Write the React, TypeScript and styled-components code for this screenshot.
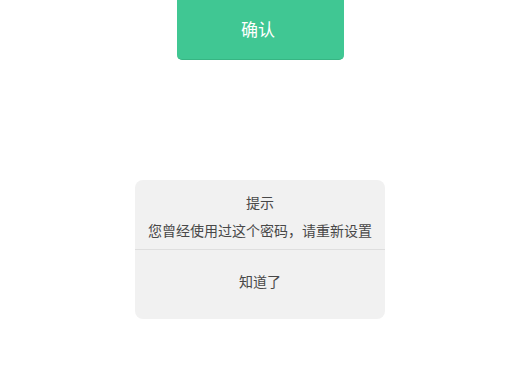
import styled, { createGlobalStyle } from "styled-components";

const GlobalStyle = createGlobalStyle`
  html, body {
    margin: 0;
    padding: 0;
    background: #ffffff;
  }

  body {
    font-family: "Noto Sans CJK SC", "Noto Sans", sans-serif;
  }
`;

const Page = styled.main`
  align-items: center;
  display: flex;
  flex-direction: column;
  width: 520px;
  height: 390px;
`;

const ConfirmButton = styled.button`
  align-items: center;
  background: #40c793;
  border: none;
  border-bottom: 1px solid #37b583;
  border-radius: 0 0 5px 5px;
  color: #ffffff;
  display: flex;
  font-family: inherit;
  font-size: 17px;
  height: 60px;
  justify-content: center;
  padding: 0 4px 2px 0;
  width: 167px;
`;

const Dialog = styled.section`
  background: #f1f1f1;
  border-radius: 8px;
  margin-top: 120px;
  overflow: hidden;
  width: 250px;
`;

const Body = styled.div`
  align-items: center;
  border-bottom: 1px solid #dedede;
  display: flex;
  flex-direction: column;
  gap: 10px;
  padding: 13px 0 10px;
`;

const Title = styled.h2`
  color: #484848;
  font-size: 14px;
  font-weight: 400;
  line-height: 18px;
  margin: 0;
`;

const Message = styled.p`
  color: #484848;
  font-size: 14px;
  line-height: 18px;
  margin: 0;
  white-space: nowrap;
`;

const Action = styled.button`
  background: transparent;
  border: none;
  color: #484848;
  display: block;
  font-family: inherit;
  font-size: 14px;
  line-height: 18px;
  padding: 22px 0 29px;
  width: 100%;
`;

function App() {
  return (
    <>
      <GlobalStyle />
      <Page>
        <ConfirmButton>确认</ConfirmButton>
        <Dialog aria-labelledby="tip">
          <Body>
            <Title id="tip">提示</Title>
            <Message>您曾经使用过这个密码，请重新设置</Message>
          </Body>
          <Action>知道了</Action>
        </Dialog>
      </Page>
    </>
  );
}

export default App;
